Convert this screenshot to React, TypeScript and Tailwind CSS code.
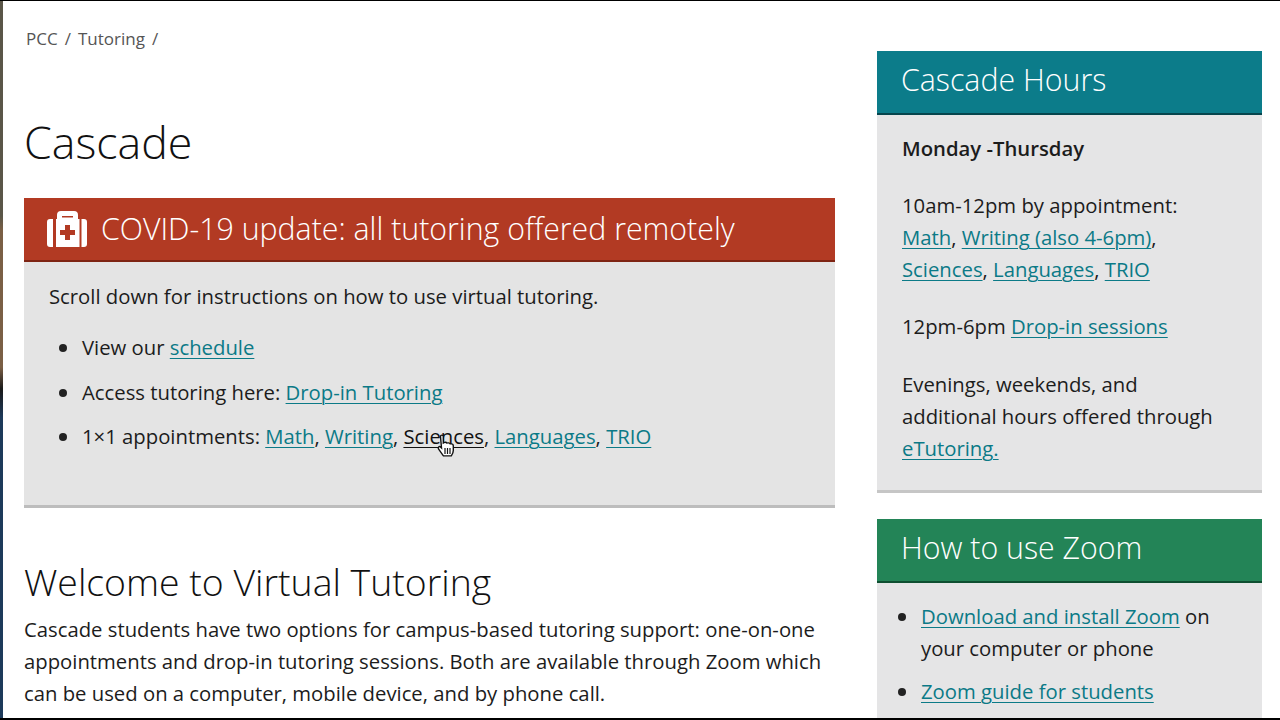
const linkClass = 'text-[#0b7a87] underline decoration-1 underline-offset-[3px]'

function A({ children }: { children: React.ReactNode }) {
  return <a href="#" className={linkClass}>{children}</a>
}

function Item({ children }: { children: React.ReactNode }) {
  return (
    <li className="flex items-start gap-[15px]">
      <span className="mt-[13px] size-[8px] shrink-0 rounded-full bg-[#222]" />
      <div>{children}</div>
    </li>
  )
}

function MedkitIcon() {
  return (
    <svg width="40" height="36" viewBox="0 0 40 36" className="shrink-0">
      <path d="M0 11a3 3 0 0 1 3-3h3v28H3a3 3 0 0 1-3-3zM34.500 8H37a3 3 0 0 1 3 3v22a3 3 0 0 1-3 3h-2.500z" fill="#fff" />
      <path fillRule="evenodd" d="M9 8h1V4a4 4 0 0 1 4-4h13a4 4 0 0 1 4 4v4h1.500v28H9zM15 5h11v1.500H15zM18 14v5h-5v5h5v5h5v-5h5v-5h-5v-5z" fill="#fff" />
    </svg>
  )
}

function HandCursor() {
  return (
    <svg width="20" height="23" viewBox="0 0 20 23" className="absolute left-[436px] top-[434px]">
      <path d="M4.500 2.500c0-1.800 2.800-1.800 2.800 0V9l1.200-.6c1-.3 2 0 2.300.7l1.300-.2c1-.1 1.800.3 2 1l1.200 0c1.200 0 2 .8 2 2v4.500c0 2.500-1 4-2 5.500H7.500c-1-1.500-3-4-5-7-1-1.500.8-3 2-2l1 1z" fill="#fff" stroke="#111" strokeWidth="1.400" />
      <path d="M9 14v6M11.500 14v6M14 14v6" stroke="#111" strokeWidth="1.200" />
    </svg>
  )
}

function Sidebar({ title, color, border, children }: { title: string; color: string; border: string; children: React.ReactNode }) {
  return (
    <section className="bg-[#e5e5e6]">
      <h2 className={`h-[64px] pl-6 border-b-2 text-white font-light text-[30.300px] leading-[58px] ${color} ${border}`}>{title}</h2>
      {children}
    </section>
  )
}

export default function App() {
  return (
    <div className="relative w-[1280px] h-[720px] overflow-hidden bg-white text-[#1c1c1c] text-[20.300px] leading-[32px] font-['Open_Sans',sans-serif] flex">
      <div className="w-[3px] shrink-0 bg-[linear-gradient(to_bottom,#5a5648_0%,#5a5648_30%,#7a5f45_32%,#7a5f45_51%,#1a1a1a_54%,#1d3a5a_58%,#1d3a5a_100%)]" />

      {/* Main column */}
      <main className="w-[832px] shrink-0 pl-[21px]">
        <nav className="pt-[24px] pl-[2px] text-[#555] text-[17px] leading-[30px] flex gap-[7px]">
          <span>PCC</span>
          <span>/</span>
          <span>Tutoring</span>
          <span>/</span>
        </nav>
        <h1 className="mt-[58px] font-light text-[44.700px] leading-[60px] text-[#111]">Cascade</h1>

        <section className="mt-[26px] bg-[#e4e4e4] border-b-[3px] border-[#bdbdbd] h-[310px]">
          <div className="h-[64px] bg-[#b23a23] border-b-2 border-[#7e2413] pl-[23px] flex items-center gap-[14px] text-white font-light text-[30.300px]">
            <MedkitIcon />
            <span>COVID-19 update: all tutoring offered remotely</span>
          </div>
          <p className="mt-[18px] pl-[25px]">Scroll down for instructions on how to use virtual tutoring.</p>
          <ul className="mt-[19px] pl-[35px] space-y-[12.500px]">
            <Item>View our <A>schedule</A></Item>
            <Item>Access tutoring here: <A>Drop-in Tutoring</A></Item>
            <Item>1×1 appointments: <A>Math</A>, <A>Writing</A>, <a href="#" className="text-[#111] underline decoration-1 underline-offset-[3px]">Sciences</a>, <A>Languages</A>, <A>TRIO</A></Item>
          </ul>
        </section>

        <h2 className="mt-[44px] font-light text-[37.400px] leading-[60px] text-[#111]">Welcome to Virtual Tutoring</h2>
        <p className="mt-[1px] w-[806px]">Cascade students have two options for campus-based tutoring support: one-on-one appointments and drop-in tutoring sessions. Both are available through Zoom which can be used on a computer, mobile device, and by phone call.</p>
      </main>

      {/* Right column */}
      <aside className="ml-[42px] w-[385px] shrink-0 pt-[51px] flex flex-col gap-[26px]">
        <Sidebar title="Cascade Hours" color="bg-[#0c7c8a]" border="border-[#06454d]">
          <div className="border-b-[3px] border-[#c6c6c6] pl-[25px] pr-4 pt-[17px] pb-[26px]">
            <p className="font-semibold">Monday -Thursday</p>
            <p className="mt-[25px]">10am-12pm by appointment:<br /><A>Math</A>, <A>Writing (also 4-6pm)</A>,<br /><A>Sciences</A>, <A>Languages</A>, <A>TRIO</A></p>
            <p className="mt-[25px]">12pm-6pm <A>Drop-in sessions</A></p>
            <p className="mt-[26px]">Evenings, weekends, and<br />additional hours offered through<br /><A>eTutoring.</A></p>
          </div>
        </Sidebar>
        <Sidebar title="How to use Zoom" color="bg-[#238457]" border="border-[#0e4f31]">
          <ul className="pl-[21px] pr-4 pt-[17px] pb-10 space-y-[11px]">
            <Item><A>Download and install Zoom</A> on your computer or phone</Item>
            <Item><A>Zoom guide for students</A></Item>
          </ul>
        </Sidebar>
      </aside>

      <HandCursor />
      <div className="absolute top-0 left-0 w-full h-px bg-black" />
      <div className="absolute bottom-0 left-0 w-full h-[2px] bg-black" />
    </div>
  )
}
